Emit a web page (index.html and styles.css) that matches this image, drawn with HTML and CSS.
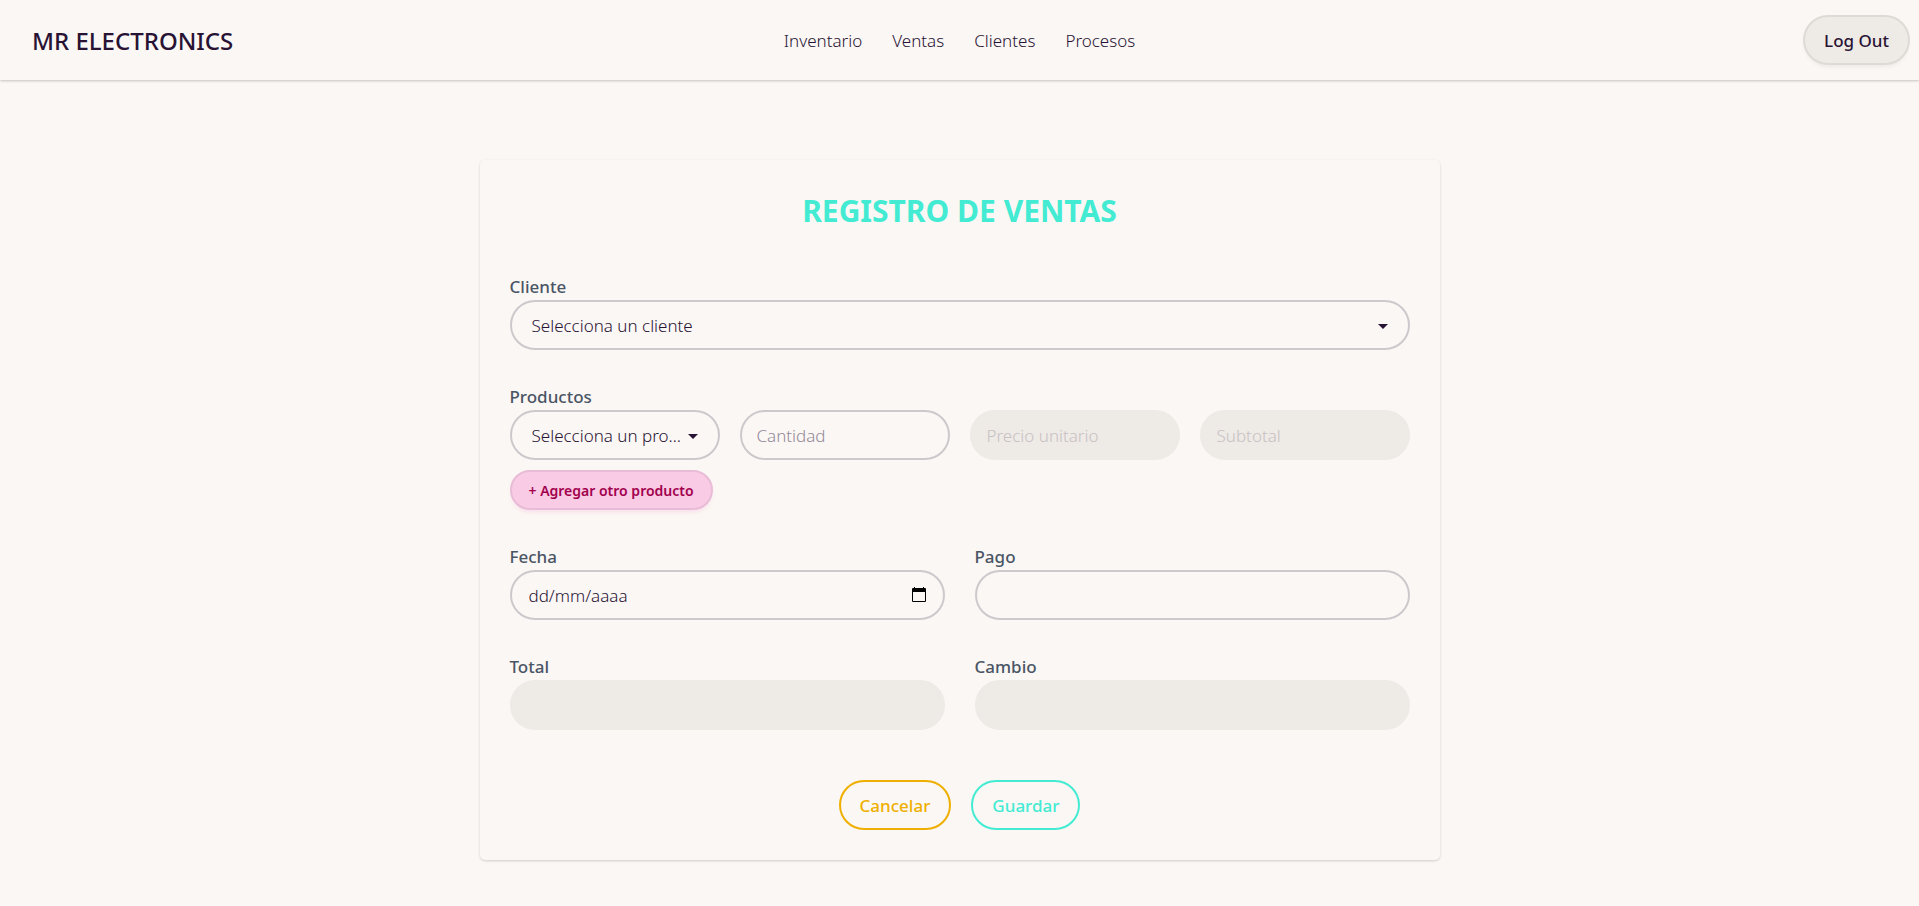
FILE: index.html
```html
<!DOCTYPE html>
<html lang="es">
<head>
<meta charset="utf-8">
<meta name="viewport" content="width=device-width, initial-scale=1">
<title>MR Electronics - Registro de ventas</title>
<link rel="stylesheet" href="styles.css">
</head>
<body>
<header class="navbar">
  <a class="brand" href="#">MR ELECTRONICS</a>
  <nav class="menu">
    <a href="#">Inventario</a>
    <a href="#">Ventas</a>
    <a href="#">Clientes</a>
    <a href="#">Procesos</a>
  </nav>
  <div class="navbar-end">
    <button class="btn btn-neutral" type="button">Log Out</button>
  </div>
</header>
<main class="page">
  <form class="card">
    <h1 class="title">REGISTRO DE VENTAS</h1>
    <div class="field">
      <label for="cliente">Cliente</label>
      <select class="control select" id="cliente"><option>Selecciona un cliente</option></select>
    </div>
    <div class="field">
      <label for="producto">Productos</label>
      <div class="products">
        <select class="control select" id="producto"><option>Selecciona un producto</option></select>
        <input class="control" type="text" placeholder="Cantidad" aria-label="Cantidad">
        <input class="control" type="text" placeholder="Precio unitario" aria-label="Precio unitario" disabled>
        <input class="control" type="text" placeholder="Subtotal" aria-label="Subtotal" disabled>
      </div>
      <button class="btn btn-add" type="button">+ Agregar otro producto</button>
    </div>
    <div class="pair">
      <div class="field">
        <label for="fecha">Fecha</label>
        <div class="control date">
          <input class="date-text" id="fecha" type="text" placeholder="dd/mm/aaaa">
          <button class="date-button" type="button" aria-label="Abrir calendario">
            <svg width="14" height="16" viewBox="0 0 14 16"><path d="M2 0h1v1h8V0h1v1h1q1 0 1 1v12q0 1-1 1H1q-1 0-1-1V2q0-1 1-1h1zM1 5v9h12V5z" fill="#000" fill-rule="evenodd"/></svg>
          </button>
        </div>
      </div>
      <div class="field">
        <label for="pago">Pago</label>
        <input class="control" id="pago" type="text">
      </div>
      <div class="field">
        <label for="total">Total</label>
        <input class="control" id="total" type="text" disabled>
      </div>
      <div class="field">
        <label for="cambio">Cambio</label>
        <input class="control" id="cambio" type="text" disabled>
      </div>
    </div>
    <div class="actions">
      <button class="btn btn-warning" type="button">Cancelar</button>
      <button class="btn btn-primary" type="submit">Guardar</button>
    </div>
  </form>
</main>
</body>
</html>
```
FILE: styles.css
```css
:root {
  --base: #fbf7f4;
  --muted: #eeeae6;
  --ink: #291334;
  --line: #cdc8cc;
  --teal: #44ebd3;
  --amber: #efaf00;
}

* {
  box-sizing: border-box;
}

body {
  margin: 0;
  min-height: 100vh;
  background: var(--base);
  color: var(--ink);
  font: 350 17px/25px "Segoe UI", "Noto Sans", "Open Sans", sans-serif;
}

a {
  color: inherit;
  text-decoration: none;
}

input,
select,
button {
  font: inherit;
  color: inherit;
}

.navbar {
  display: grid;
  grid-template-columns: 1fr auto 1fr;
  align-items: center;
  min-height: 80px;
  padding: 0 9px;
  box-shadow: 0 1px 3px rgb(0 0 0 / 12%), 0 1px 2px rgb(0 0 0 / 10%);
}

.brand {
  padding-left: 23px;
  font-size: 24px;
  font-weight: 500;
}

.menu {
  display: flex;
  gap: 30px;
}

.navbar-end {
  display: flex;
  justify-content: flex-end;
}

.btn {
  height: 50px;
  padding: 0 19px;
  border: 2px solid;
  border-radius: 25px;
  background: transparent;
  font-weight: 500;
}

.btn-neutral {
  border-color: #dedad6;
  background: var(--muted);
  box-shadow: 0 4px 4px -2px rgb(0 0 0 / 6%);
}

.btn-add {
  align-self: flex-start;
  height: 40px;
  margin-top: 10px;
  padding: 0 17px;
  border-color: #e8bcd6;
  border-radius: 20px;
  background: #f9cbe5;
  box-shadow: 0 4px 4px -2px rgb(249 203 229 / 60%);
  color: #a1004d;
  font-size: 14px;
  font-weight: 600;
}

.btn-warning {
  color: var(--amber);
}

.btn-primary {
  color: var(--teal);
}

.page {
  padding: 80px 20px 46px;
}

.card {
  display: flex;
  flex-direction: column;
  gap: 35px;
  max-width: 960px;
  margin: 0 auto;
  padding: 30px;
  border-radius: 5px;
  box-shadow: 0 1px 3px rgb(0 0 0 / 10%), 0 1px 2px rgb(0 0 0 / 8%);
}

.title {
  margin: 0 0 8px;
  color: var(--teal);
  font-size: 30px;
  font-weight: 700;
  line-height: 42px;
  text-align: center;
}

.field {
  display: flex;
  flex-direction: column;
  min-width: 0;
}

.field label {
  padding-bottom: 1px;
  color: #4a5565;
  font-weight: 500;
  line-height: 24px;
}

.control {
  width: 100%;
  min-width: 0;
  height: 50px;
  padding: 0 15px;
  border: 2px solid var(--line);
  border-radius: 25px;
  outline: 0;
  background: var(--base);
}

.control::placeholder {
  color: #948998;
  opacity: 1;
}

.control:disabled {
  border-color: var(--muted);
  background: var(--muted);
}

.control:disabled::placeholder {
  color: #c8c1c4;
}

.select {
  appearance: none;
  padding: 0 30px 0 20px;
  background-image: url("data:image/svg+xml,%3Csvg xmlns='http://www.w3.org/2000/svg' width='10' height='5'%3E%3Cpath d='M0 0h10L5 5z' fill='%23291334'/%3E%3C/svg%3E");
  background-position: right 20px top 22px;
  background-repeat: no-repeat;
  text-overflow: ellipsis;
}

.products {
  display: grid;
  grid-template-columns: repeat(4, 1fr);
  gap: 20px;
}

.pair {
  display: grid;
  grid-template-columns: 1fr 1fr;
  gap: 35px 30px;
}

.date {
  display: flex;
  align-items: center;
}

.date-text {
  flex: 1;
  min-width: 0;
  padding: 0 2px;
  border: 0;
  outline: 0;
  background: transparent;
}

.date-text::placeholder {
  color: var(--ink);
  opacity: 1;
}

.date-button {
  display: flex;
  padding: 0 2px;
  border: 0;
  background: transparent;
}

.actions {
  display: flex;
  justify-content: center;
  gap: 20px;
  margin-top: 15px;
}
```
